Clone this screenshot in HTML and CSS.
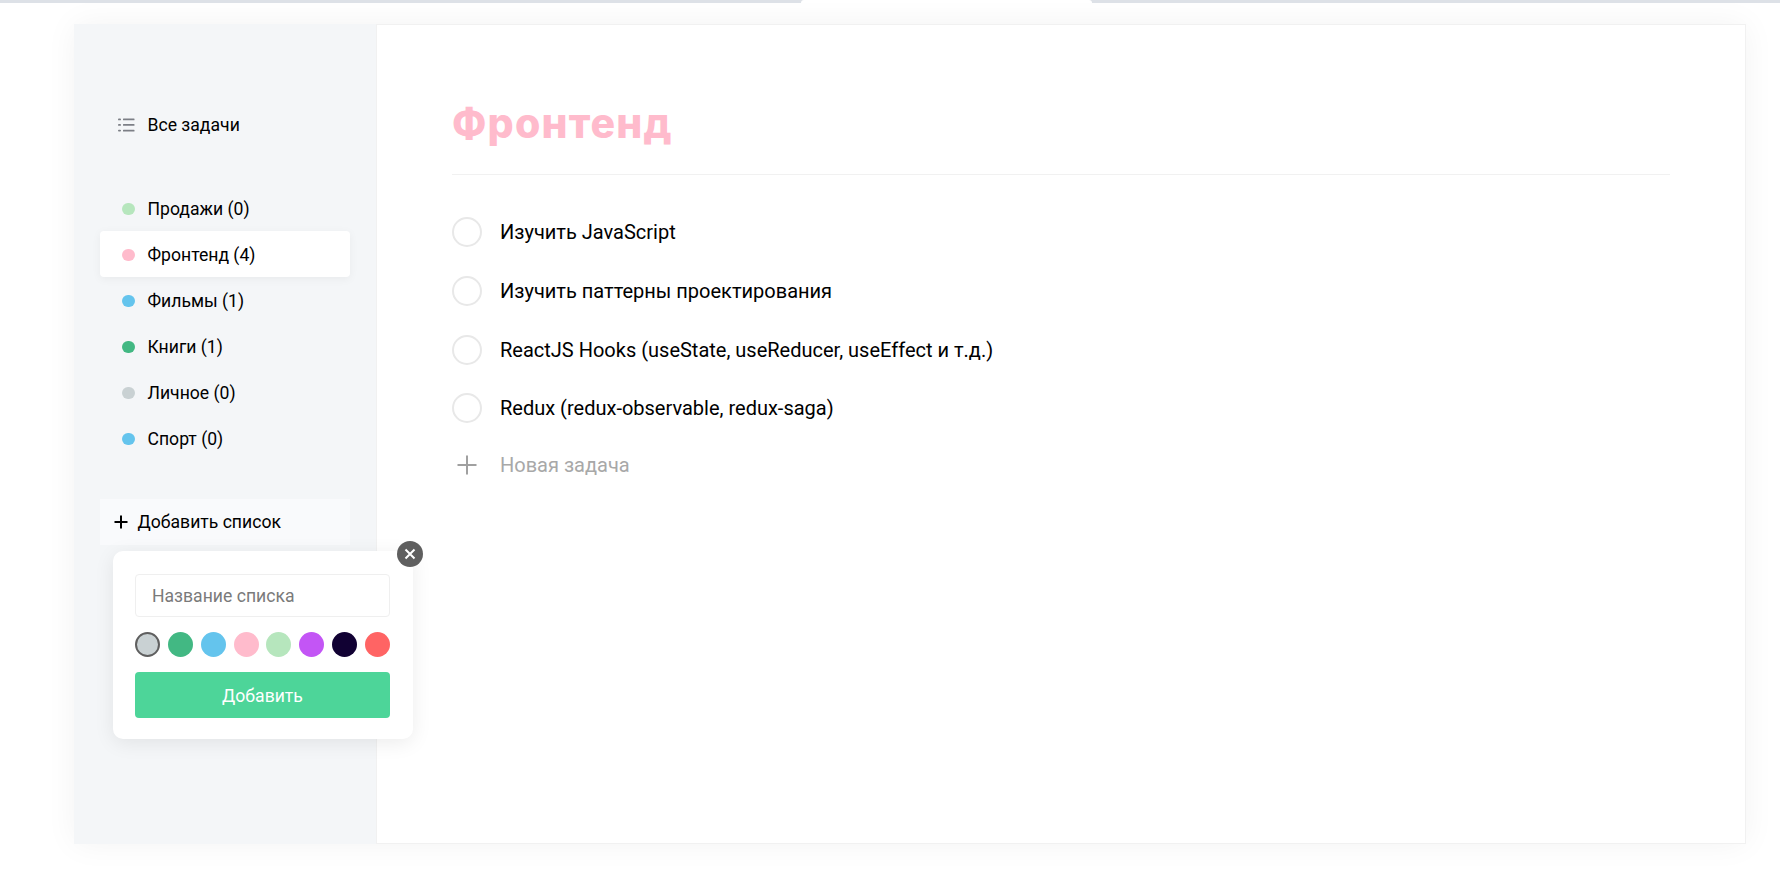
FILE: index.html
```html
<!DOCTYPE html>
<html lang="en">
<head>
    <meta charset="UTF-8">
    <meta name="viewport" content="width=device-width, initial-scale=1.0">
    <title>Todo</title>
    <link rel="stylesheet" href="styles.css">
</head>
<body>
    <div class="topbar">
        <div class="topbar-line topbar-left"></div>
        <div class="topbar-tab"></div>
        <div class="topbar-line topbar-right"></div>
    </div>

    <div class="todo">
        <aside class="sidebar">
            <ul class="list">
                <li class="list-item">
                    <span class="list-icon">
                        <svg width="17" height="14" viewBox="0 0 17 14" fill="#7c7f86">
                            <rect x="0" y="0.5" width="3" height="1.8" rx="0.9"/>
                            <rect x="0" y="6" width="3" height="1.8" rx="0.9"/>
                            <rect x="0" y="11.7" width="3" height="1.8" rx="0.9"/>
                            <rect x="5" y="0.5" width="11.5" height="1.8" rx="0.5"/>
                            <rect x="5" y="6" width="11.5" height="1.8" rx="0.5"/>
                            <rect x="5" y="11.7" width="11.5" height="1.8" rx="0.5"/>
                        </svg>
                    </span>
                    <span>Все задачи</span>
                </li>
            </ul>

            <ul class="list list-folders">
                <li class="list-item"><span class="list-icon"><i class="dot dot-lime"></i></span><span>Продажи (0)</span></li>
                <li class="list-item active"><span class="list-icon"><i class="dot dot-pink"></i></span><span>Фронтенд (4)</span></li>
                <li class="list-item"><span class="list-icon"><i class="dot dot-blue"></i></span><span>Фильмы (1)</span></li>
                <li class="list-item"><span class="list-icon"><i class="dot dot-green"></i></span><span>Книги (1)</span></li>
                <li class="list-item"><span class="list-icon"><i class="dot dot-grey"></i></span><span>Личное (0)</span></li>
                <li class="list-item"><span class="list-icon"><i class="dot dot-blue"></i></span><span>Спорт (0)</span></li>
            </ul>

            <div class="add-list">
                <button class="add-list-btn" type="button">
                    <svg width="14" height="14" viewBox="0 0 14 14" fill="none" stroke="#000" stroke-width="2">
                        <path d="M7 0.5V13.5M0.5 7H13.5"/>
                    </svg>
                    <span>Добавить список</span>
                </button>

                <div class="popup">
                    <button class="popup-close" type="button">
                        <svg width="12" height="12" viewBox="0 0 12 12" fill="none" stroke="#fff" stroke-width="2">
                            <path d="M1.5 1.5L10.5 10.5M10.5 1.5L1.5 10.5"/>
                        </svg>
                    </button>
                    <input class="field" type="text" placeholder="Название списка">
                    <div class="colors">
                        <i class="swatch dot-grey selected"></i>
                        <i class="swatch dot-green"></i>
                        <i class="swatch dot-blue"></i>
                        <i class="swatch dot-pink"></i>
                        <i class="swatch dot-lime"></i>
                        <i class="swatch dot-purple"></i>
                        <i class="swatch dot-black"></i>
                        <i class="swatch dot-red"></i>
                    </div>
                    <button class="submit" type="button">Добавить</button>
                </div>
            </div>
        </aside>

        <main class="tasks">
            <h2 class="tasks-title">Фронтенд</h2>
            <div class="tasks-items">
                <div class="task"><span class="check"></span><p>Изучить JavaScript</p></div>
                <div class="task"><span class="check"></span><p>Изучить паттерны проектирования</p></div>
                <div class="task"><span class="check"></span><p>ReactJS Hooks (useState, useReducer, useEffect и т.д.)</p></div>
                <div class="task"><span class="check"></span><p>Redux (redux-observable, redux-saga)</p></div>
            </div>
            <div class="task-new">
                <svg width="20" height="20" viewBox="0 0 20 20" fill="none" stroke="#a0a0a0" stroke-width="2">
                    <path d="M10 0.5V19.5M0.5 10H19.5"/>
                </svg>
                <span>Новая задача</span>
            </div>
        </main>
    </div>
</body>
</html>
```

FILE: styles.css
```css
* {
    box-sizing: border-box;
}
body {
    margin: 0;
    height: 890px;
    overflow: hidden;
    background: #fff;
    font-family: Roboto, "Liberation Sans", sans-serif;
    color: #000;
}
button, input {
    font-family: inherit;
}
ul {
    list-style: none;
    margin: 0;
    padding: 0;
}
i {
    display: block;
}

.topbar {
    display: flex;
    height: 3px;
}
.topbar-line {
    background-color: #dde1e7;
}
.topbar-left {
    width: 804px;
}
.topbar-tab {
    position: relative;
    width: 291px;
    margin: 0 -3px;
    background: #fff;
    border-radius: 8px 8px 0 0;
}
.topbar-right {
    flex: 1;
}

.todo {
    display: flex;
    width: 1672px;
    height: 820px;
    margin: 21px 0 0 74px;
    box-shadow: 0 0 30px rgba(0, 0, 0, 0.05);
    background: #fff;
}

.sidebar {
    width: 302px;
    flex-shrink: 0;
    padding: 77px 26px 0 26px;
    background-color: #f4f6f8;
}
.list-folders {
    margin-top: 38px;
}
.list-item {
    display: flex;
    align-items: center;
    height: 46px;
    padding-top: 2px;
    font-size: 17.6px;
    border-radius: 4px;
}
.list-item.active {
    background: #fff;
    box-shadow: 0 2px 10px rgba(0, 0, 0, 0.05);
}
.list-icon {
    display: flex;
    align-items: center;
    width: 47.5px;
    padding-left: 22px;
}
.list-icon svg {
    margin-left: -4px;
}
.dot {
    width: 12.5px;
    height: 12.5px;
    border-radius: 50%;
}
.dot-lime { background-color: #b6e6bd; }
.dot-pink { background-color: #ffbbcc; }
.dot-blue { background-color: #64c4ed; }
.dot-green { background-color: #42b883; }
.dot-grey { background-color: #c9d1d3; }
.dot-purple { background-color: #c355f5; }
.dot-black { background-color: #110133; }
.dot-red { background-color: #ff6464; }

.add-list {
    position: relative;
    margin-top: 38px;
}
.add-list-btn {
    display: flex;
    align-items: center;
    gap: 9.5px;
    width: 100%;
    height: 46px;
    padding: 0 0 0 14px;
    border: none;
    background-color: #f9fafc;
    color: #000;
    font-size: 17.6px;
}

.popup {
    position: absolute;
    top: 52px;
    left: 13px;
    width: 300px;
    height: 188px;
    padding: 23px 22px;
    background: #fff;
    border-radius: 10px;
    box-shadow: 0 4px 20px rgba(0, 0, 0, 0.08);
}
.popup-close {
    position: absolute;
    top: -10px;
    right: -10px;
    display: flex;
    justify-content: center;
    align-items: center;
    width: 26px;
    height: 26px;
    padding: 0;
    border: none;
    border-radius: 50%;
    background-color: #5f5f5f;
}
.field {
    display: block;
    width: 255px;
    height: 43px;
    padding: 0 16px;
    border: 1px solid #efefef;
    border-radius: 4px;
    font-size: 17.6px;
    background: #fff;
}
.field::placeholder {
    color: #7a7a7a;
    opacity: 1;
}
.colors {
    display: flex;
    justify-content: space-between;
    width: 255px;
    margin-top: 15px;
}
.swatch {
    width: 25px;
    height: 25px;
    border-radius: 50%;
}
.swatch.selected {
    border: 2px solid #5f5f5f;
}
.submit {
    display: block;
    width: 255px;
    height: 46px;
    margin-top: 15px;
    padding-top: 3px;
    border: none;
    border-radius: 4px;
    background-color: #4dd599;
    color: #fff;
    font-size: 17.6px;
}

.tasks {
    flex: 1;
    padding: 75px 75px 0 75px;
    border: 1px solid #f1f1f1;
}
.tasks-title {
    margin: 0;
    height: 75px;
    border-bottom: 1px solid #f1f1f1;
    color: #ffbbcc;
    font-family: Inter, sans-serif;
    font-size: 41px;
    font-weight: 800;
    letter-spacing: 1.2px;
    line-height: 47px;
}
.tasks-items {
    padding-top: 28px;
}
.task {
    display: flex;
    align-items: center;
    height: 58.7px;
}
.task p {
    margin: 0;
    font-size: 20px;
}
.check {
    width: 30px;
    height: 30px;
    margin-right: 18px;
    border: 2px solid #e8e8e8;
    border-radius: 50%;
}
.task-new {
    display: flex;
    align-items: center;
    height: 55px;
    color: #a8a8a8;
    font-size: 20px;
}
.task-new svg {
    margin: 0 23px 0 5px;
}
```
